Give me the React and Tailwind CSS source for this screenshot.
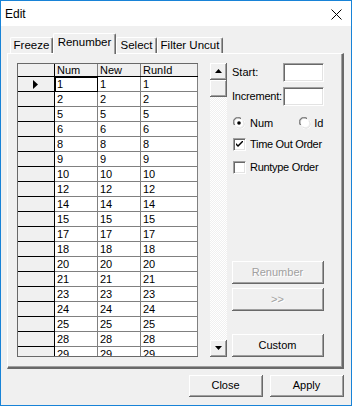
const ROWS = [1, 2, 5, 6, 8, 9, 10, 12, 14, 15, 17, 18, 20, 21, 23, 24, 25, 28, 29]

const FONT = { fontFamily: '"Liberation Sans", Arial, sans-serif' }

const raised =
  'bg-[#f0f0f0] border-r border-b border-[#696969] shadow-[inset_1px_1px_0_#fff,inset_-1px_-1px_0_#a0a0a0]'
const sunken =
  'bg-white border-l border-t border-[#a0a0a0] border-r border-b border-r-white border-b-white shadow-[inset_1px_1px_0_#696969,inset_-1px_-1px_0_#e3e3e3]'

function Button({ children, disabled, className = '' }) {
  return (
    <div className={`${raised} flex items-center justify-center text-[11px] ${className}`}>
      <span className={disabled ? 'text-[#a0a0a0] [text-shadow:1px_1px_0_#fff]' : 'text-black'}>{children}</span>
    </div>
  )
}

function Tab({ label, active, className = '' }) {
  return (
    <div
      className={`flex items-center justify-center border-l border-t border-white border-r border-r-[#696969] shadow-[inset_-1px_0_0_#a0a0a0] rounded-t-[2px] text-[11.5px] whitespace-nowrap ${
        active ? 'h-[21px] -mb-px relative z-10 bg-[#f0f0f0] pb-[2px]' : 'h-[16px] pt-[1px]'
      } ${className}`}
    >
      {label}
    </div>
  )
}

function Radio({ checked }) {
  return (
    <svg width="12" height="12" viewBox="0 0 12 12" className="shrink-0">
      <path d="M1 8 A5 5 0 0 1 8 1" fill="none" stroke="#a0a0a0" />
      <path d="M2 8 A4 4 0 0 1 8 2" fill="none" stroke="#696969" />
      <circle cx="6" cy="6" r="4" fill="#fff" />
      <path d="M11 4 A5 5 0 0 1 4 11" fill="none" stroke="#fff" />
      <path d="M10 4 A4 4 0 0 1 4 10" fill="none" stroke="#e3e3e3" />
      {checked && <circle cx="6" cy="6" r="1.8" fill="#000" />}
    </svg>
  )
}

function Check({ checked }) {
  return (
    <div className={`${sunken} w-[13px] h-[13px] shrink-0 flex items-center justify-center`}>
      {checked && (
        <svg width="7" height="7" viewBox="0 0 7 7">
          <path d="M0 2 L0 4 L2 6 L7 1 L7 -1 L2 4 Z" fill="#000" />
        </svg>
      )}
    </div>
  )
}

function ScrollBtn({ down }) {
  return (
    <div className={`${raised} w-[17px] h-[17px] flex items-center justify-center shrink-0`}>
      <svg width="7" height="4" viewBox="0 0 7 4">
        <path d={down ? 'M0 0 H7 L3.5 4 Z' : 'M0 4 H7 L3.5 0 Z'} fill="#000" />
      </svg>
    </div>
  )
}

function Grid() {
  const cell = 'h-full border-r border-[#808080] pl-[2px] leading-[14px]'
  return (
    <div className="w-[181px] h-[294px] overflow-hidden border-l border-t border-b border-[#696969] bg-white text-[11px] text-black">
      <div className="flex h-[13px] border-b border-black bg-[#f0f0f0] leading-[12px]">
        <div className="w-[37px] border-r border-black h-full" />
        <div className="w-[43px] border-r border-[#808080] h-full pl-[2px]">Num</div>
        <div className="w-[43px] border-r border-[#808080] h-full pl-[2px]">New</div>
        <div className="w-[57px] border-r border-[#808080] h-full pl-[2px]">RunId</div>
      </div>
      {ROWS.map((n, i) => (
        <div key={n} className="flex h-[15px] shrink-0">
          <div className="w-[37px] h-full border-r border-b border-black bg-[#f0f0f0] flex items-center justify-center">
            {i === 0 && (
              <svg width="6" height="9" viewBox="0 0 6 9">
                <path d="M0 0 L5 4.5 L0 9 Z" fill="#000" />
              </svg>
            )}
          </div>
          <div className={`w-[43px] ${cell} ${i === 0 ? 'border-b border-black shadow-[inset_1px_1px_0_#000] border-r-black' : 'border-b'}`}>{n}</div>
          <div className={`w-[43px] ${cell} border-b`}>{n}</div>
          <div className={`w-[57px] ${cell} border-b`}>{n}</div>
        </div>
      ))}
    </div>
  )
}

export default function App() {
  return (
    <div style={FONT} className="w-[352px] h-[406px] border border-[#1883d7] flex flex-col bg-[#f0f0f0] text-black overflow-hidden">
      <div className="h-[25px] bg-white flex items-center justify-between pl-[4px] pr-[9px] shrink-0">
        <span className="text-[12px] pt-[1px]">Edit</span>
        <svg width="11" height="11" viewBox="0 0 11 11" className="mt-[1px]">
          <path d="M0.5 0.5 L10.5 10.5 M10.5 0.5 L0.5 10.5" stroke="#000" strokeWidth="1" />
        </svg>
      </div>

      <div className="flex flex-col pl-[6px] pr-[7px] pt-[7px]">
        <div className="flex items-end h-[20px] pl-[3px] shrink-0">
          <Tab label="Freeze" className="w-[43px]" />
          <Tab label="Renumber" active className="w-[63px]" />
          <Tab label="Select" className="w-[41px]" />
          <Tab label="Filter Uncut" className="w-[66px]" />
        </div>

        <div className="h-[316px] border-l border-t border-white border-r-2 border-b-2 border-r-[#696969] border-b-[#696969] shadow-[inset_-1px_-1px_0_#a0a0a0] pl-[9px] pt-[9px] flex">
          <div className="flex h-[294px]">
            <Grid />
            <div className="w-[12px]" />
            <div className="w-[17px] h-full flex flex-col bg-[image:repeating-conic-gradient(#fff_0%_25%,#f0f0f0_0%_50%)] bg-size-[2px_2px]">
              <ScrollBtn />
              <div className={`${raised} h-[17px] w-[17px]`} />
              <div className="flex-1" />
              <ScrollBtn down />
            </div>
          </div>

          <div className="ml-[5px] w-[92px] h-[294px] flex flex-col text-[11px] whitespace-nowrap">
            <div className="flex items-center justify-between h-[19px]">
              <span>Start:</span>
              <div className={`${sunken} w-[41px] h-[19px]`} />
            </div>
            <div className="flex items-center justify-between h-[19px] mt-[5px]">
              <span className="tracking-[-0.2px]">Increment:</span>
              <div className={`${sunken} w-[41px] h-[19px]`} />
            </div>
            <div className="flex items-center h-[14px] mt-[10px] pl-[1px]">
              <Radio checked />
              <span className="ml-[5px]">Num</span>
              <div className="ml-[26px]">
                <Radio />
              </div>
              <span className="ml-[3px]">Id</span>
            </div>
            <div className="flex items-center h-[13px] mt-[8px] pl-[1px]">
              <Check checked />
              <span className="ml-[4px] tracking-[-0.3px]">Time Out Order</span>
            </div>
            <div className="flex items-center h-[13px] mt-[10px] pl-[1px]">
              <Check />
              <span className="ml-[4px] tracking-[-0.3px]">Runtype Order</span>
            </div>
            <Button disabled className="h-[23px] mt-[87px]">Renumber</Button>
            <Button disabled className="h-[23px] mt-[4px]">&gt;&gt;</Button>
            <Button className="h-[23px] mt-auto">Custom</Button>
          </div>
        </div>

        <div className="flex justify-end gap-[7px] mt-[6px]">
          <Button className="w-[74px] h-[22px]">Close</Button>
          <Button className="w-[74px] h-[22px]">Apply</Button>
        </div>
      </div>
    </div>
  )
}
